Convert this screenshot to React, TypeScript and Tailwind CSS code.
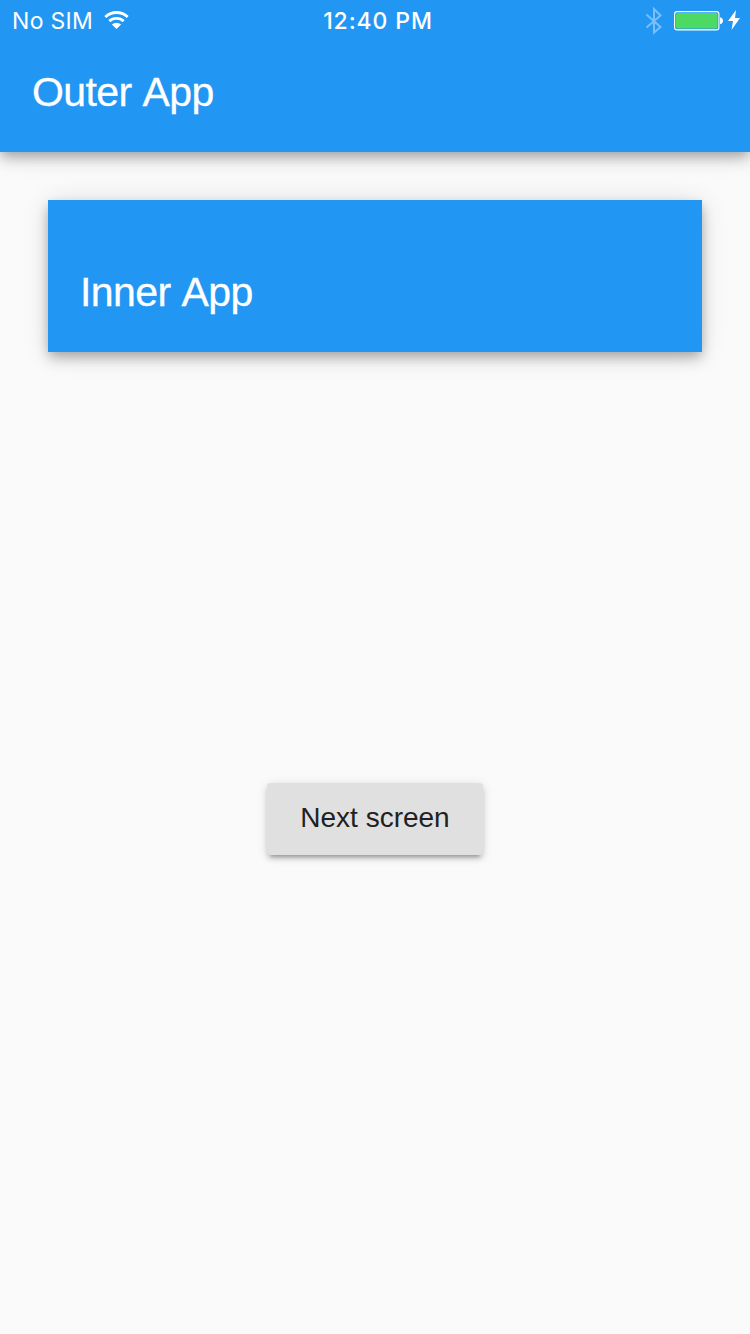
function StatusBar() {
  return (
    <div className="grid h-[42px] grid-cols-3 items-center pr-[9px] pl-3 font-['Inter',sans-serif] text-[23px] leading-[42px] text-white">
      <div className="flex items-center gap-[11px]">
        <span className="tracking-[0.3px] whitespace-nowrap">No SIM</span>
        <svg className="-mt-0.5" width="25" height="18" viewBox="0 0 25 18" fill="none" stroke="white" strokeWidth="2.8">
          <path d="M1.3 5.9a16.4 16.4 0 0 1 22.4 0" />
          <path d="M5.3 10.1a10.7 10.7 0 0 1 14.4 0" />
          <path d="M12.5 18 7.900 13.600a6.500 6.500 0 0 1 9.200 0z" fill="white" stroke="none" />
        </svg>
      </div>
      <span className="justify-self-center pl-[3px] font-medium tracking-[0.9px] whitespace-nowrap">12:40 PM</span>
      <div className="flex items-center justify-end">
        <svg className="mr-[11px]" width="18" height="28" viewBox="0 0 18 28" fill="none" stroke="#7abff9" strokeWidth="2">
          <path d="M1.5 7.5 15.5 20 9 25.5V2l6.5 6.5L1.5 20.5" />
        </svg>
        <svg className="mr-1" width="50" height="20" viewBox="0 0 50 20">
          <rect x="0.6" y="0.6" width="44.3" height="18.3" rx="2.5" fill="none" stroke="white" strokeWidth="1.1" />
          <rect x="2" y="2" width="41.5" height="15.5" rx="1.5" fill="#4cd964" />
          <path d="M46 6.2c4 .8 4 6.3 0 7.1z" fill="white" />
        </svg>
        <svg className="-mt-0.5 mr-px" width="12" height="20" viewBox="0 0 12 20" fill="white">
          <path d="M8 0 0 11h5L3.5 20 12 8H7z" />
        </svg>
      </div>
    </div>
  );
}

export default function App() {
  return (
    <div className="flex h-[1334px] w-[750px] flex-col overflow-hidden bg-[#fafafa] font-['Liberation_Sans',Arial,sans-serif]">
      <header className="h-[152px] shrink-0 bg-[#2196f3] text-white shadow-[0_4px_10px_-2px_rgba(0,0,0,0.2),0_8px_13px_rgba(0,0,0,0.14),0_2px_25px_rgba(0,0,0,0.12)]">
        <StatusBar />
        <h1 className="pt-[25px] pl-8 text-[41px] leading-[50px] tracking-[-0.6px] [word-spacing:2.5px] [-webkit-text-stroke:0.3px_white]">Outer App</h1>
      </header>
      <main className="flex flex-1 flex-col px-12 pt-12">
        <section className="h-[152px] bg-[#2196f3] pt-[67px] pl-8 text-white shadow-[0_4px_10px_-2px_rgba(0,0,0,0.2),0_8px_13px_rgba(0,0,0,0.14),0_2px_25px_rgba(0,0,0,0.12)]">
          <h2 className="text-[41px] leading-[50px] tracking-[-0.6px] [word-spacing:2.5px] [-webkit-text-stroke:0.3px_white]">Inner App</h2>
        </section>
        <button className="mt-[431px] h-[72px] w-[216px] self-center rounded-[4px] bg-[#e0e0e0] pb-0.5 text-[28px] whitespace-nowrap text-[#212121] shadow-[0_6px_3px_-4px_rgba(0,0,0,0.2),0_4px_5px_rgba(0,0,0,0.14),0_2px_12px_rgba(0,0,0,0.12)]">
          Next screen
        </button>
      </main>
    </div>
  );
}
